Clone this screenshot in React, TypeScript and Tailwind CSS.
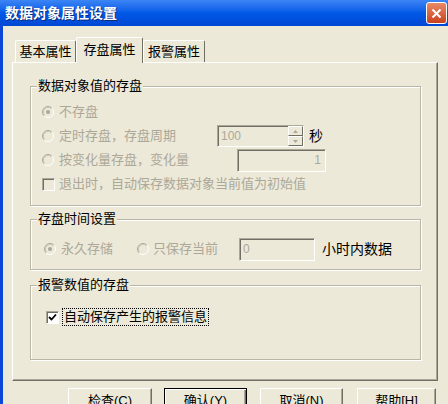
import React from 'react';

const Radio = ({ checked }: { checked?: boolean }) => (
  <svg width="12" height="12" viewBox="0 0 12 12" className="shrink-0">
    <circle cx="6" cy="6" r="5.5" fill="#ECE9D8" />
    <path d="M2.11 9.89 A5.5 5.5 0 0 1 9.89 2.11" fill="none" stroke="#ACA899" strokeWidth="1" />
    <path d="M9.89 2.11 A5.5 5.5 0 0 1 2.11 9.89" fill="none" stroke="#FFFFFF" strokeWidth="1" />
    <path d="M2.82 9.18 A4.5 4.5 0 0 1 9.18 2.82" fill="none" stroke="#C9C6B8" strokeWidth="1" />
    {checked && <circle cx="6" cy="6" r="2" fill="#ACA899" />}
  </svg>
);

const Check = ({ checked, enabled }: { checked?: boolean; enabled?: boolean }) => (
  <span
    className={
      'w-[13px] h-[13px] shrink-0 flex items-center justify-center border border-t-[#ACA899] border-l-[#ACA899] border-r-white border-b-white shadow-[inset_1px_1px_0_#716F64] ' +
      (enabled ? 'bg-white' : 'bg-[#ECE9D8]')
    }
  >
    {checked && (
      <svg width="9" height="9" viewBox="0 0 9 9">
        <path d="M1 4 L3.5 6.5 L8 1.5" fill="none" stroke="#000" strokeWidth="1.8" />
      </svg>
    )}
  </span>
);

const Field = ({ value, w, h, right }: { value: string; w: string; h: string; right?: boolean }) => (
  <div
    className={`${w} ${h} flex items-center border border-t-[#ACA899] border-l-[#ACA899] border-r-white border-b-white shadow-[inset_1px_1px_0_#716F64] bg-[#ECE9D8] text-[#ACA899] text-[12px] ${right ? 'justify-end pr-[4px]' : 'pl-[3px]'}`}
  >
    {value}
  </div>
);

const Group = ({ title, h, mt, children }: { title: string; h: string; mt: string; children: React.ReactNode }) => (
  <div className={`relative w-[391px] ${h} ${mt} border border-[#B9B6A7] shadow-[inset_1px_1px_0_#fff,1px_1px_0_#fff]`}>
    <span className="absolute -top-[9px] left-[6px] px-[1px] bg-[#ECE9D8] text-black text-[13px] leading-[16px]">
      {title}
    </span>
    {children}
  </div>
);

const Tab = ({ label, active, w }: { label: string; active?: boolean; w: string }) => (
  <div
    className={
      `${w} flex items-center justify-center text-[13px] text-black border-t border-l border-white border-r border-r-[#716F64] rounded-t-[2px] bg-[#ECE9D8] ` +
      (active ? 'h-[26px] -mb-[1px] relative z-10 pb-[2px]' : 'h-[22px]')
    }
  >
    {label}
  </div>
);

const Btn = ({ label, w, def }: { label: string; w: string; def?: boolean }) => (
  <div
    className={
      `${w} h-[26px] flex items-center justify-center text-[13px] text-black bg-[#ECE9D8] ` +
      (def
        ? 'border border-black shadow-[inset_1px_1px_0_#fff,inset_-1px_-1px_0_#716F64,inset_-2px_-2px_0_#ACA899]'
        : 'border border-t-white border-l-white border-r-[#716F64] border-b-[#716F64] shadow-[inset_-1px_-1px_0_#ACA899]')
    }
  >
    {label}
  </div>
);

export default function App() {
  return (
    <div className="w-[448px] h-[404px] overflow-hidden bg-[#ECE9D8] flex flex-col font-['Liberation_Sans','Noto_Sans_CJK_SC',sans-serif]">
      <div className="h-[26px] shrink-0 flex items-center justify-between pl-[5px] pr-[1px] bg-linear-to-b from-[#3C85F5] via-[#0058E6] to-[#0048D4]">
        <span className="text-white font-bold text-[14px] leading-none [text-shadow:1px_1px_0_#0A2A7A]">数据对象属性设置</span>
        <div className="w-[21px] h-[22px] rounded-[3px] border border-white bg-linear-to-b from-[#E98A66] to-[#C8401A] flex items-center justify-center">
          <svg width="11" height="11" viewBox="0 0 11 11">
            <path d="M1.5 1.5 L9.5 9.5 M9.5 1.5 L1.5 9.5" stroke="#fff" strokeWidth="2" />
          </svg>
        </div>
      </div>

      <div className="flex-1 border-l-[3px] border-[#0A46D8] pl-[9px] pt-[11px]">
        <div className="h-[25px] flex items-end pl-[3px]">
          <Tab label="基本属性" w="w-[61px]" />
          <Tab label="存盘属性" w="w-[67px]" active />
          <Tab label="报警属性" w="w-[62px]" />
        </div>

        <div className="w-[426px] h-[319px] border-t border-l border-white border-r border-b border-r-[#716F64] border-b-[#716F64] shadow-[inset_-1px_-1px_0_#ACA899] pl-[17px] pt-[23px]">
          <Group title="数据对象值的存盘" h="h-[120px]" mt="mt-0">
            <div className="pt-[13px] pl-[11px] text-[13px] text-[#ACA899]">
              <div className="h-[24px] flex items-center gap-[5px]">
                <Radio checked />
                <span>不存盘</span>
              </div>
              <div className="h-[24px] flex items-center">
                <div className="w-[175px] flex items-center gap-[5px]">
                  <Radio />
                  <span>定时存盘，存盘周期</span>
                </div>
                <div className="relative">
                  <Field value="100" w="w-[87px]" h="h-[22px]" />
                  <div className="absolute right-[1px] top-[1px] w-[15px] h-[20px] flex flex-col">
                    <div className="h-[10px] flex items-center justify-center border border-t-white border-l-white border-r-[#716F64] border-b-[#716F64] bg-[#ECE9D8]">
                      <svg width="5" height="3" viewBox="0 0 5 3"><path d="M0 3 L2.5 0 L5 3Z" fill="#ACA899" /></svg>
                    </div>
                    <div className="h-[10px] flex items-center justify-center border border-t-white border-l-white border-r-[#716F64] border-b-[#716F64] bg-[#ECE9D8]">
                      <svg width="5" height="3" viewBox="0 0 5 3"><path d="M0 0 L2.5 3 L5 0Z" fill="#ACA899" /></svg>
                    </div>
                  </div>
                </div>
                <span className="ml-[5px] text-black text-[14px]">秒</span>
              </div>
              <div className="h-[24px] flex items-center">
                <div className="w-[195px] flex items-center gap-[5px]">
                  <Radio />
                  <span>按变化量存盘，变化量</span>
                </div>
                <Field value="1" w="w-[89px]" h="h-[23px]" right />
              </div>
              <div className="h-[24px] flex items-center gap-[4px]">
                <Check />
                <span>退出时，自动保存数据对象当前值为初始值</span>
              </div>
            </div>
          </Group>

          <Group title="存盘时间设置" h="h-[51px]" mt="mt-[13px]">
            <div className="pt-[17px] pl-[13px] h-[41px] flex items-center text-[13px] text-[#ACA899]">
              <Radio checked />
              <span className="ml-[5px]">永久存储</span>
              <span className="ml-[24px] flex items-center">
                <Radio />
              </span>
              <span className="ml-[4px]">只保存当前</span>
              <span className="ml-[21px]">
                <Field value="0" w="w-[76px]" h="h-[23px]" />
              </span>
              <span className="ml-[7px] text-black text-[14px]">小时内数据</span>
            </div>
          </Group>

          <Group title="报警数值的存盘" h="h-[75px]" mt="mt-[15px]">
            <div className="pt-[22px] pl-[15px] flex items-center gap-[3px] text-[13px] text-black">
              <Check checked enabled />
              <span className="border border-dotted border-black px-[1px] leading-[16px]">自动保存产生的报警信息</span>
            </div>
          </Group>
        </div>

        <div className="mt-[7px] flex pl-[56px]">
          <Btn label="检查(C)" w="w-[84px]" />
          <div className="ml-[12px]"><Btn label="确认(Y)" w="w-[83px]" def /></div>
          <div className="ml-[13px]"><Btn label="取消(N)" w="w-[83px]" /></div>
          <div className="ml-[14px]"><Btn label="帮助[H]" w="w-[79px]" /></div>
        </div>
      </div>
    </div>
  );
}
